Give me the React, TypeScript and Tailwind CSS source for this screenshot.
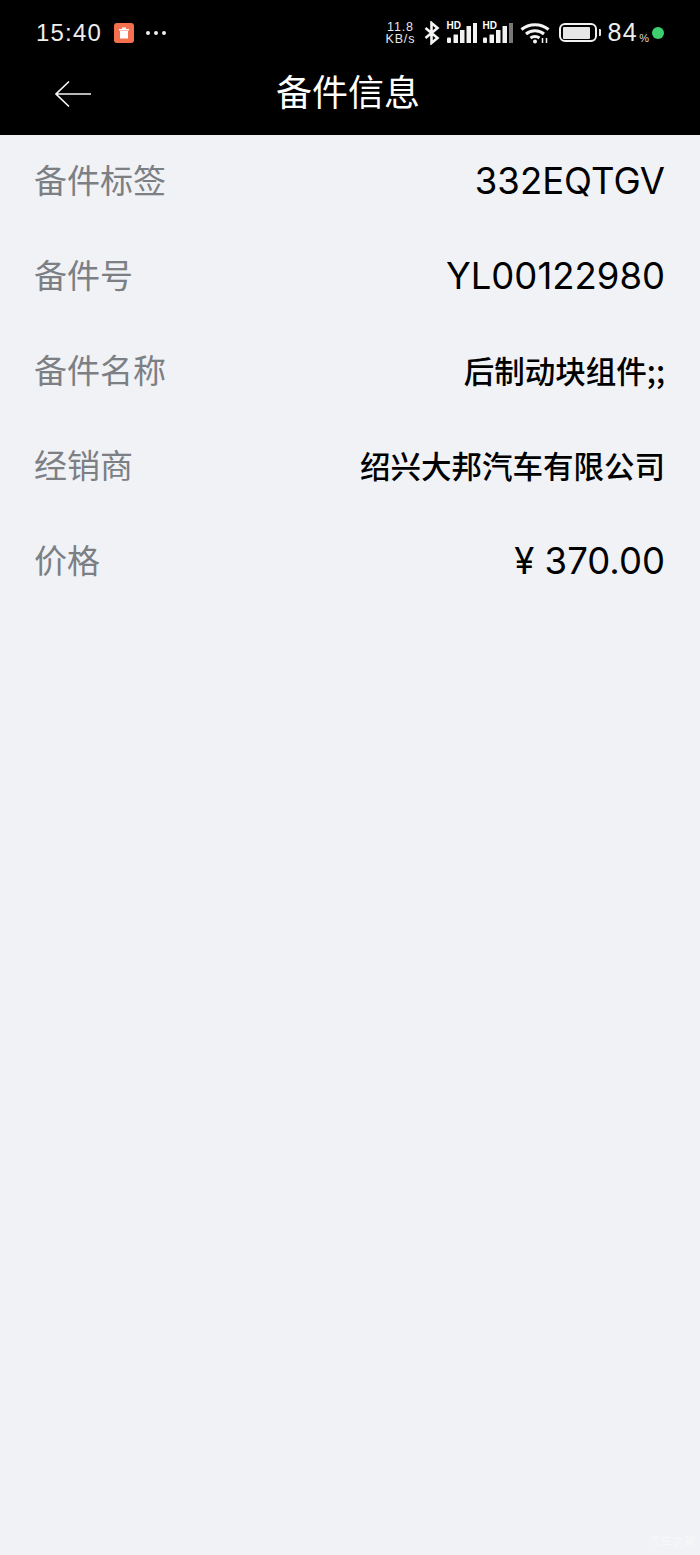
const Bars = ({ dim }: { dim?: boolean }) => (
  <div className="relative w-[31px] h-[22px]">
    <span className="absolute left-0 top-[-1px] text-[10px] leading-[10px] font-bold text-white font-['Liberation_Sans']">HD</span>
    <svg width="31" height="22" viewBox="0 0 31 22" className="block">
      <rect x="1" y="15.500" width="4" height="5.500" rx="1" fill="#f2f2f2" />
      <rect x="7.5" y="12.500" width="4.5" height="8.500" rx="0.5" fill="#f2f2f2" />
      <rect x="14" y="8" width="4.5" height="13" fill="#f2f2f2" />
      <rect x="20.5" y="4" width="4.5" height="17" fill="#f2f2f2" />
      <rect x="27" y="1" width="4" height="20" fill={dim ? "#777" : "#f2f2f2"} />
    </svg>
  </div>
);

const rows = [
  ["备件标签", "332EQTGV", false],
  ["备件号", "YL00122980", true],
  ["备件名称", "后制动块组件;;", true],
  ["经销商", "绍兴大邦汽车有限公司", true],
  ["价格", "¥ 370.00", false],
] as const;

export default function App() {
  return (
    <div className="w-[700px] h-[1555px] bg-[#f0f2f5] relative overflow-hidden font-['Roboto','Noto_Sans_CJK_SC',sans-serif]">
      <header className="h-[135px] bg-black text-white">
        <div className="h-[65px] pl-[36px] pr-[36px] flex items-center justify-between">
          <div className="flex items-center">
            <span className="text-[24px] leading-none tracking-[1.2px] text-[#eeeeee] font-['Liberation_Sans']">15:40</span>
            <div className="ml-[12px] w-[20px] h-[20px] rounded-[3px] bg-[#f4704f] flex items-center justify-center">
              <svg width="12" height="12" viewBox="0 0 12 12">
                <rect x="1" y="2" width="10" height="1.5" fill="#fff" />
                <rect x="4" y="0.5" width="4" height="1.5" fill="#fff" />
                <path d="M2 4h8v7.5H2z" fill="#fff" />
              </svg>
            </div>
            <div className="ml-[12px] flex gap-[4px]">
              <span className="w-[4px] h-[4px] rounded-full bg-[#eeeeee]" />
              <span className="w-[4px] h-[4px] rounded-full bg-[#eeeeee]" />
              <span className="w-[4px] h-[4px] rounded-full bg-[#eeeeee]" />
            </div>
          </div>
          <div className="flex items-center">
            <div className="w-[34px] text-[#e8e8e8] text-[12.5px] leading-[12px] tracking-[0.8px] font-['Liberation_Sans'] text-center">
              <div>11.8</div>
              <div className="whitespace-nowrap">KB/s</div>
            </div>
            <svg className="ml-[6px]" width="17" height="24" viewBox="0 0 16 24" fill="none" stroke="#f4f4f4" strokeWidth="2.6">
              <path d="M2 7l12 10-6 5V2l6 5L2 17" />
            </svg>
            <div className="ml-[6px]"><Bars /></div>
            <div className="ml-[5px]"><Bars dim /></div>
            <svg className="ml-[7px]" width="30" height="22" viewBox="0 0 30 22" fill="none" stroke="#f4f4f4" strokeWidth="3">
              <path d="M1.500 7.500c7.500-6.500 19.500-6.500 27 0" />
              <path d="M6 12c5-4.300 13-4.300 18 0" />
              <path d="M10.500 16c2.500-2 6.500-2 9 0" />
              <circle cx="15" cy="19.500" r="2" fill="#f4f4f4" stroke="none" />
              <path d="M22.500 21v-5M26.500 21v-5" strokeWidth="1.500" />
            </svg>
            <div className="ml-[9px] w-[38px] h-[19px] rounded-[6px] border-2 border-[#f2f2f2] py-[1.5px] pl-[2px]">
              <div className="h-full w-[27px] rounded-[1px] bg-[#e6e6e6]" />
            </div>
            <div className="ml-[2px] w-[2px] h-[7px] bg-[#e8e8e8] rounded-r-[1px]" />
            <span className="ml-[6px] text-[25px] leading-none tracking-[1.5px] text-[#eeeeee] font-['Liberation_Sans']">84</span>
            <span className="ml-[1px] mt-[11px] text-[11px] leading-none text-[#dddddd] font-['Liberation_Sans']">%</span>
            <div className="ml-[3px] w-[12px] h-[12px] rounded-full bg-[#3ecf6f]" />
          </div>
        </div>
        <div className="h-[58px] relative flex items-center justify-center">
          <svg className="absolute left-[54px] top-[14px]" width="38" height="30" viewBox="0 0 38 30" fill="none" stroke="#f5f5f5" strokeWidth="1.7">
            <path d="M37 15H2M15 2.500L2 15l13 12.500" />
          </svg>
          <h1 className="mb-[8px] mr-[4px] text-[36px] leading-none font-normal text-white font-['Noto_Sans_CJK_SC']">备件信息</h1>
        </div>
      </header>
      <main>
        {rows.map(([label, value, line]) => {
          const cjk = /[\u4e00-\u9fa5]/.test(value);
          return (
            <div key={label} className={`h-[95px] ml-[34px] mr-[35px] flex items-center justify-between border-b-2 ${line ? "border-[#eff1f4]" : "border-transparent"}`}>
              <span className="mb-[5px] text-[33px] leading-none text-[#7c7f84] font-['Noto_Sans_CJK_SC']">{label}</span>
              <span className={cjk ? "mb-[3px] text-[30.5px] leading-none font-medium text-black font-['Noto_Sans_CJK_SC']" : "text-[36.5px] leading-none text-black font-['Inter']"}>{value}</span>
            </div>
          );
        })}
      </main>
      <span className="absolute right-[4px] bottom-[8px] text-[12px] leading-none text-[#f8f8f8] font-['Noto_Sans_CJK_SC']">汽车之家</span>
    </div>
  );
}
